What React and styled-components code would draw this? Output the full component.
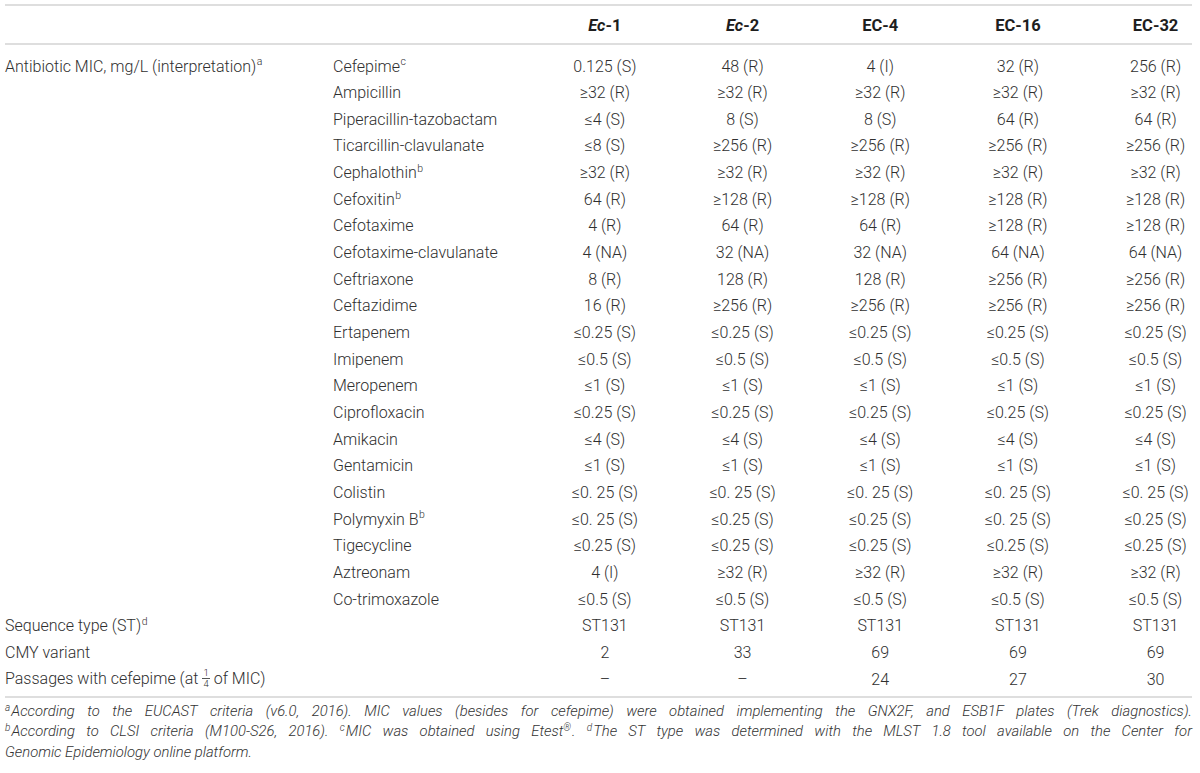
import React from "react";
import styled, { createGlobalStyle } from "styled-components";

const GlobalStyle = createGlobalStyle`
  html, body { margin: 0; padding: 0; background: #ffffff; }
  body {
    font-family: Roboto, "Liberation Sans", Arial, sans-serif;
    font-weight: 300;
    color: #2f2f2f;
  }
`;

const Page = styled.div`
  padding: 4px 8px 0 5px;
  width: 1187px;
`;

const Table = styled.div`
  width: 1187px;
  border-top: 2px solid #dedede;
  border-bottom: 2px solid #dedede;
`;

const COLS = "328px 170.5px repeat(5, 137.7px)";

const HeadRow = styled.div`
  display: grid;
  grid-template-columns: ${COLS};
  height: 38.7px;
  padding-top: 3px;
  box-sizing: border-box;
  align-items: center;
  border-bottom: 2px solid #dedede;
`;

const Body = styled.div`
  padding: 8px 0 3.2px;
`;

const Row = styled.div`
  display: grid;
  grid-template-columns: ${COLS};
  height: 26.66px;
  align-items: center;
`;

const Label = styled.div`
  font-size: 16px;
  white-space: nowrap;
`;

const Drug = styled.div`
  font-size: 16px;
  white-space: nowrap;
`;

const Cell = styled.div`
  font-size: 16px;
  padding-left: 65px;
  text-align: center;
  white-space: nowrap;
`;

const HeadCell = styled(Cell)`
  font-weight: 700;
  font-size: 16.5px;
  color: #1e1e1e;
`;

const Em = styled.span`
  font-style: italic;
`;

const Sup = styled.sup`
  font-size: 10.5px;
  line-height: 0;
  vertical-align: 0.6em;
  margin-left: 0.5px;
`;

const Frac = styled.span`
  display: inline-flex;
  flex-direction: column;
  align-items: center;
  vertical-align: middle;
  font-size: 9.5px;
  line-height: 9.5px;
  margin: 0 4px;
  position: relative;
  top: -1px;
`;

const FracNum = styled.span`
  border-bottom: 1px solid #555;
  padding: 0 1px;
`;

const Notes = styled.div`
  font-size: 14.8px;
  font-style: italic;
  line-height: 20.8px;
  color: #333;
  padding-top: 3px;
`;

const NoteLine = styled.div`
  text-align: justify;
  text-align-last: ${(p) => (p.$last ? "left" : "justify")};
  white-space: nowrap;
`;

const NSup = styled.sup`
  font-size: 10px;
  line-height: 0;
  vertical-align: 0.5em;
  margin-right: 1px;
`;

const GE = "\u2265";
const LE = "\u2264";

const rows = [
  ["Cefepime", "c", ["0.125 (S)", "48 (R)", "4 (I)", "32 (R)", "256 (R)"]],
  ["Ampicillin", null, Array(5).fill(`${GE}32 (R)`)],
  ["Piperacillin-tazobactam", null, [`${LE}4 (S)`, "8 (S)", "8 (S)", "64 (R)", "64 (R)"]],
  ["Ticarcillin-clavulanate", null, [`${LE}8 (S)`, `${GE}256 (R)`, `${GE}256 (R)`, `${GE}256 (R)`, `${GE}256 (R)`]],
  ["Cephalothin", "b", Array(5).fill(`${GE}32 (R)`)],
  ["Cefoxitin", "b", ["64 (R)", `${GE}128 (R)`, `${GE}128 (R)`, `${GE}128 (R)`, `${GE}128 (R)`]],
  ["Cefotaxime", null, ["4 (R)", "64 (R)", "64 (R)", `${GE}128 (R)`, `${GE}128 (R)`]],
  ["Cefotaxime-clavulanate", null, ["4 (NA)", "32 (NA)", "32 (NA)", "64 (NA)", "64 (NA)"]],
  ["Ceftriaxone", null, ["8 (R)", "128 (R)", "128 (R)", `${GE}256 (R)`, `${GE}256 (R)`]],
  ["Ceftazidime", null, ["16 (R)", `${GE}256 (R)`, `${GE}256 (R)`, `${GE}256 (R)`, `${GE}256 (R)`]],
  ["Ertapenem", null, Array(5).fill(`${LE}0.25 (S)`)],
  ["Imipenem", null, Array(5).fill(`${LE}0.5 (S)`)],
  ["Meropenem", null, Array(5).fill(`${LE}1 (S)`)],
  ["Ciprofloxacin", null, Array(5).fill(`${LE}0.25 (S)`)],
  ["Amikacin", null, Array(5).fill(`${LE}4 (S)`)],
  ["Gentamicin", null, Array(5).fill(`${LE}1 (S)`)],
  ["Colistin", null, Array(5).fill(`${LE}0. 25 (S)`)],
  ["Polymyxin B", "b", [`${LE}0. 25 (S)`, `${LE}0.25 (S)`, `${LE}0.25 (S)`, `${LE}0. 25 (S)`, `${LE}0.25 (S)`]],
  ["Tigecycline", null, Array(5).fill(`${LE}0.25 (S)`)],
  ["Aztreonam", null, ["4 (I)", `${GE}32 (R)`, `${GE}32 (R)`, `${GE}32 (R)`, `${GE}32 (R)`]],
  ["Co-trimoxazole", null, Array(5).fill(`${LE}0.5 (S)`)],
];

const extra = [
  [<>Sequence type (ST)<Sup>d</Sup></>, Array(5).fill("ST131")],
  ["CMY variant", ["2", "33", "69", "69", "69"]],
  [
    <>
      Passages with cefepime (at
      <Frac>
        <FracNum>1</FracNum>
        <span>4</span>
      </Frac>
      of MIC)
    </>,
    ["\u2013", "\u2013", "24", "27", "30"],
  ],
];

export default function App() {
  return (
    <>
      <GlobalStyle />
      <Page>
        <Table>
          <HeadRow>
            <Label />
            <Drug />
            <HeadCell><Em>Ec</Em>-1</HeadCell>
            <HeadCell><Em>Ec</Em>-2</HeadCell>
            <HeadCell>EC-4</HeadCell>
            <HeadCell>EC-16</HeadCell>
            <HeadCell>EC-32</HeadCell>
          </HeadRow>
          <Body>
            {rows.map(([name, sup, vals], i) => (
              <Row key={name}>
                <Label>
                  {i === 0 ? (
                    <>Antibiotic MIC, mg/L (interpretation)<Sup>a</Sup></>
                  ) : null}
                </Label>
                <Drug>
                  {name}
                  {sup ? <Sup>{sup}</Sup> : null}
                </Drug>
                {vals.map((v, j) => (
                  <Cell key={j}>{v}</Cell>
                ))}
              </Row>
            ))}
            {extra.map(([label, vals], i) => (
              <Row key={"x" + i}>
                <Label>{label}</Label>
                <Drug />
                {vals.map((v, j) => (
                  <Cell key={j}>{v}</Cell>
                ))}
              </Row>
            ))}
          </Body>
        </Table>
        <Notes>
          <NoteLine>
            <NSup>a</NSup>According to the EUCAST criteria (v6.0, 2016). MIC values (besides for cefepime) were obtained implementing the GNX2F, and ESB1F plates (Trek diagnostics).
          </NoteLine>
          <NoteLine>
            <NSup>b</NSup>According to CLSI criteria (M100-S26, 2016). <NSup>c</NSup>MIC was obtained using Etest<NSup>®</NSup>. <NSup>d</NSup>The ST type was determined with the MLST 1.8 tool available on the Center for
          </NoteLine>
          <NoteLine $last>Genomic Epidemiology online platform.</NoteLine>
        </Notes>
      </Page>
    </>
  );
}
